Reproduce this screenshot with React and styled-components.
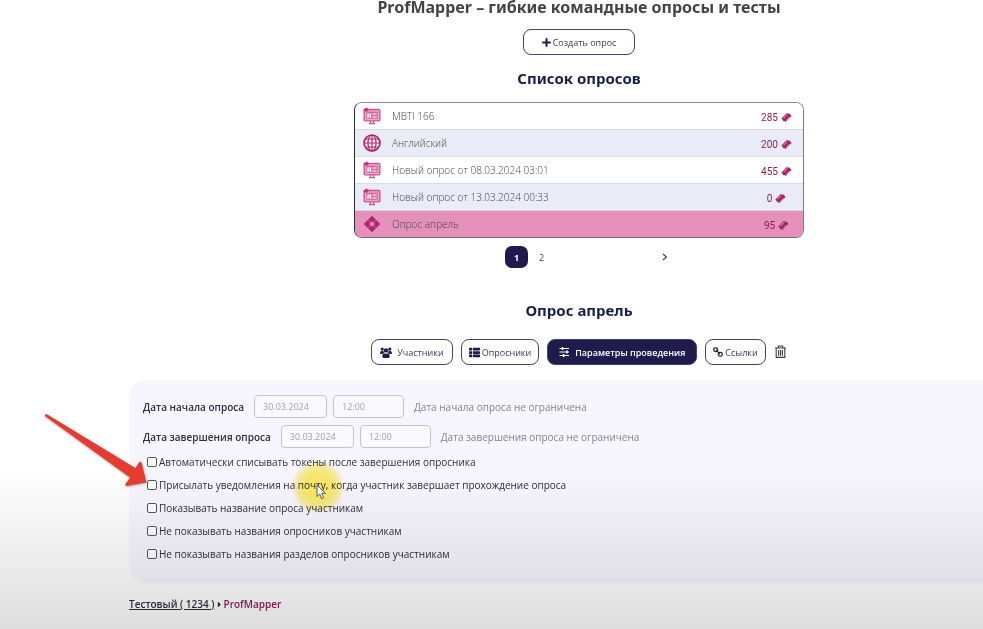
import React, { useState } from 'react';
import styled, { createGlobalStyle } from 'styled-components';
import { FaThList, FaCaretRight } from 'react-icons/fa';

const surveys = [
  { id: 1, name: 'MBTI 166', tokens: 285, icon: 'monitor' },
  { id: 2, name: 'Английский', tokens: 200, icon: 'globe' },
  { id: 3, name: 'Новый опрос от 08.03.2024 03:01', tokens: 455, icon: 'monitor' },
  { id: 4, name: 'Новый опрос от 13.03.2024 00:33', tokens: 0, icon: 'monitor' },
  { id: 5, name: 'Опрос апрель', tokens: 95, icon: 'diamond' },
];

const dates = [
  { id: 'start', label: 'Дата начала опроса', note: 'Дата начала опроса не ограничена' },
  { id: 'end', label: 'Дата завершения опроса', note: 'Дата завершения опроса не ограничена' },
];

const options = [
  'Автоматически списывать токены после завершения опросника',
  'Присылать уведомления на почту, когда участник завершает прохождение опроса',
  'Показывать название опроса участникам',
  'Не показывать названия опросников участникам',
  'Не показывать названия разделов опросников участникам',
];

const PlusIcon = () => (
  <svg width="9" height="9" viewBox="0 0 9 9">
    <path d="M4.5 1 V8 M1 4.5 H8" stroke="#1f1b4d" strokeWidth="2" strokeLinecap="round" />
  </svg>
);

const UsersIcon = () => (
  <svg width="12" height="11" viewBox="0 0 12 11" fill="#1f1b4d">
    <circle cx="2.2" cy="2.1" r="1.6" />
    <circle cx="9.8" cy="2.1" r="1.6" />
    <circle cx="6" cy="3.4" r="2.2" />
    <path d="M0 6.2 Q0 4 1.8 4 H3.4 Q3.8 5.4 4.4 5.8 Q3 6 2.4 7 H0.6 Q0 7 0 6.2 Z" />
    <path d="M12 6.2 Q12 4 10.2 4 H8.6 Q8.2 5.4 7.6 5.8 Q9 6 9.6 7 H11.4 Q12 7 12 6.2 Z" />
    <path d="M2.3 9.6 Q2.3 6.2 4.4 6.2 Q6 7.2 7.6 6.2 Q9.7 6.2 9.7 9.6 Q9.7 11 8.4 11 H3.6 Q2.3 11 2.3 9.6 Z" />
  </svg>
);

const MonitorIcon = () => (
  <svg width="18" height="18" viewBox="0 0 18 18" fill="none" stroke="#cc5593">
    <rect x="1.2" y="2.5" width="15.6" height="11.4" rx="1" fill="#f0a9cb" strokeWidth="1.4" />
    <path d="M0.4 2.6 L3.6 0.6 L6 2.2 L4.6 4.6 L1.2 4.6 Z" fill="#c2377f" stroke="none" />
    <rect x="3.4" y="4.6" width="11.4" height="7.2" fill="#d968a1" stroke="none" />
    <path d="M5 11 V7 H7.6 V11 M5 9 H7.6 M9.6 7 H13.6 M9.6 10 H13.6" stroke="#fff" strokeWidth="1.2" />
    <path d="M7.4 14 V16 M10.6 14 V16 M6 16.6 H12" strokeWidth="1.2" />
  </svg>
);

const GlobeIcon = () => (
  <svg width="18" height="18" viewBox="0 0 18 18" fill="none" stroke="#b0246a" strokeWidth="1.1">
    <circle cx="9" cy="9" r="8" fill="#fbeaf3" strokeWidth="1.6" />
    <ellipse cx="9" cy="9" rx="4" ry="8" />
    <path d="M9 1 V17 M1 9 H17 M2.2 5 H15.8 M2.2 13 H15.8" />
  </svg>
);

const DiamondIcon = () => (
  <svg width="18" height="18" viewBox="0 0 18 18">
    <path d="M9 0.8 L17.2 9 L9 17.2 L0.8 9 Z" fill="#b0246a" />
    <path d="M9 6.2 L11.8 9 L9 11.8 L6.2 9 Z" fill="#e590ba" />
    <path
      d="M4.9 4.9 L7.4 7.4 M13.1 4.9 L10.6 7.4 M4.9 13.1 L7.4 10.6 M13.1 13.1 L10.6 10.6"
      stroke="#e590ba"
      strokeWidth="0.6"
    />
  </svg>
);

const TokenIcon = () => (
  <svg width="11" height="11" viewBox="0 0 11 11">
    <path d="M0.4 6.6 L6.2 0.8 L7.3 2 L8.2 1.2 L10.6 4 L9.6 5 L4.6 10 L3.6 9 L2.8 9.6 Z" fill="#a3225f" />
    <path d="M2.4 6.4 L6.2 2.6 M5.1 8.6 L8.9 4.8" stroke="#f3d3e2" strokeWidth="0.8" />
  </svg>
);

const SlidersIcon = () => (
  <svg width="11" height="10" viewBox="0 0 11 10" fill="none" stroke="#fff" strokeWidth="1">
    <path d="M0.5 1.5 H10 M0.5 5 H10 M0.5 8.5 H10" />
    <path d="M3.5 0 V3 M8 3.5 V6.5 M4.5 7 V10" strokeWidth="1.6" />
  </svg>
);

const ChainIcon = () => (
  <svg width="10" height="10" viewBox="0 0 10 10" fill="none" stroke="#2a2840" strokeWidth="1.3">
    <rect x="0.8" y="0.8" width="3.8" height="3.8" rx="1.5" />
    <rect x="5.4" y="5.4" width="3.8" height="3.8" rx="1.5" />
    <path d="M3 3 L7 7" />
  </svg>
);

const TrashIcon = () => (
  <svg width="13" height="14" viewBox="0 0 13 14" fill="none" stroke="#3d3b4d" strokeWidth="1.1">
    <path d="M1 3 H12 M4.3 3 V1 H8.7 V3 M2.2 3 V12.4 H10.8 V3 M4.6 5 V10.8 M6.5 5 V10.8 M8.4 5 V10.8" />
  </svg>
);

const icons = { monitor: MonitorIcon, globe: GlobeIcon, diamond: DiamondIcon };

const App = () => {
  const [selected, setSelected] = useState(5);
  const [checked, setChecked] = useState([]);

  const toggle = (index) =>
    setChecked((prev) => (prev.includes(index) ? prev.filter((i) => i !== index) : [...prev, index]));

  return (
    <StPage>
      <GlobalStyle />
      <StMain>
        <StTitle>ProfMapper – гибкие командные опросы и тесты</StTitle>
        <StButton $wide>
          <PlusIcon />
          Создать опрос
        </StButton>
        <StHeading>Список опросов</StHeading>

        <StList>
          {surveys.map(({ id, name, tokens, icon }) => {
            const Icon = icons[icon];
            return (
              <StItem key={id}>
                <StRow $active={id === selected} onClick={() => setSelected(id)}>
                  <Icon />
                  <StName>{name}</StName>
                  <StTokens>
                    {tokens}
                    <TokenIcon />
                  </StTokens>
                </StRow>
              </StItem>
            );
          })}
        </StList>

        <StPagination>
          <StPageButton $current>1</StPageButton>
          <StPageButton>2</StPageButton>
          <StNext aria-label="Следующая страница">
            <svg width="6" height="8" viewBox="0 0 6 8" fill="none" stroke="#444" strokeWidth="1.2">
              <path d="M1 1 L4.4 4 L1 7" />
            </svg>
          </StNext>
        </StPagination>

        <StSurveyHeading>Опрос апрель</StSurveyHeading>
        <StTabs>
          <StButton>
            <UsersIcon />
            Участники
          </StButton>
          <StButton $tight>
            <FaThList size={11} color="#1f1b4d" />
            Опросники
          </StButton>
          <StButton $primary>
            <SlidersIcon />
            Параметры проведения
          </StButton>
          <StButton $tight>
            <ChainIcon />
            Ссылки
          </StButton>
          <StIconButton aria-label="Удалить опрос">
            <TrashIcon />
          </StIconButton>
        </StTabs>

        <StPanel>
          {dates.map(({ id, label, note }) => (
            <StDateRow key={id}>
              <StDateLabel htmlFor={`${id}-date`}>{label}</StDateLabel>
              <StInputs>
                <StInput id={`${id}-date`} defaultValue="30.03.2024" />
                <StInput $short aria-label={`${label}, время`} defaultValue="12:00" />
              </StInputs>
              <StNote>{note}</StNote>
            </StDateRow>
          ))}
          <StOptions>
            {options.map((text, index) => (
              <StOption key={text}>
                <StCheckbox type="checkbox" checked={checked.includes(index)} onChange={() => toggle(index)} />
                {text}
              </StOption>
            ))}
          </StOptions>
        </StPanel>

        <StBreadcrumbs>
          <a href="#test">Тестовый ( 1234 )</a>
          <FaCaretRight size={9} />
          <span>ProfMapper</span>
        </StBreadcrumbs>
      </StMain>

      {/* затемнение внизу и указатели поверх страницы */}
      <StShade />
      <StSpot />
      <StCursor width="11" height="16" viewBox="0 0 11 16">
        <path d="M1 1 V12.5 L3.7 10 L5.6 14.6 L7.6 13.8 L5.7 9.3 H9.4 Z" fill="#fff" stroke="#444" strokeWidth="0.9" />
      </StCursor>
      <StArrow width="106" height="76" viewBox="0 0 106 76">
        <path
          d="M1.2 3.2 Q0 0.5 3.4 1.4 L91.5 55 L95.3 49 Q97 48 97.8 50 L102.5 69.5 L82.5 73 Q80.5 72.5 81.8 70.5 L86 64.5 Z"
          fill="#e63c30"
        />
      </StArrow>
    </StPage>
  );
};

const GlobalStyle = createGlobalStyle`
  * {
    box-sizing: border-box;
  }
  body {
    margin: 0;
    background: #fff;
    color: #2f2d3f;
    font-family: 'Open Sans', 'Noto Sans', sans-serif;
    font-size: 10px;
  }
  button, input {
    font-family: inherit;
  }
`;

const StPage = styled.div`
  position: relative;
  min-height: 100vh;
  overflow: hidden;
`;

const StMain = styled.main`
  display: flex;
  flex-direction: column;
  align-items: center;
  margin-left: 129px;
  margin-right: -46px;
`;

const StTitle = styled.h1`
  margin: 0 0 15px;
  font-family: 'Noto Sans', sans-serif;
  font-size: 16px;
  font-weight: 700;
  line-height: 14px;
  color: #444;
`;

const StHeading = styled.h2`
  margin: 11px 0 12px;
  font-family: 'Noto Sans', sans-serif;
  font-size: 15px;
  font-weight: 700;
  line-height: 24px;
  color: #16204a;
`;

const StSurveyHeading = styled(StHeading)`
  margin: 30px 0 17px;
`;

const StButton = styled.button`
  display: flex;
  align-items: center;
  justify-content: center;
  gap: ${({ $tight, $wide }) => ($tight || $wide ? '2px' : '5px')};
  height: 26px;
  padding: 0 ${({ $wide, $primary, $tight }) => ($wide ? '18px' : $primary ? '11px' : $tight ? '7px' : '8px')};
  border: 1px solid #45436a;
  border-radius: 8px;
  background: ${({ $primary }) => ($primary ? '#1f1b4d' : '#fff')};
  color: ${({ $primary }) => ($primary ? '#fff' : '#3d3b4d')};
  font-size: 9px;
  font-weight: ${({ $primary }) => ($primary ? 600 : 400)};
  white-space: nowrap;
  cursor: pointer;
`;

const StIconButton = styled.button`
  display: flex;
  padding: 0;
  border: 0;
  background: none;
  cursor: pointer;
`;

const StList = styled.ul`
  width: 450px;
  margin: 0;
  padding: 0;
  list-style: none;
  border: 1px solid;
  border-color: #8d8c96 #7b7986 #6d6b7c #2a2840;
  border-radius: 8px;
  overflow: hidden;
`;

const StItem = styled.li`
  background: #fff;
  border-bottom: 1px solid #d9d9de;
  &:nth-child(even) {
    background: #e9ecf6;
  }
  &:last-child {
    border-bottom: 0;
  }
`;

const StRow = styled.button`
  display: flex;
  align-items: center;
  width: 100%;
  height: 26px;
  padding: 0 0 0 8px;
  border: 0;
  background: ${({ $active }) => ($active ? '#e590ba' : 'transparent')};
  text-align: left;
  cursor: pointer;
`;

const StName = styled.span`
  flex: 1;
  padding-left: 11px;
  font-size: 10px;
  font-weight: 300;
  color: #444;
`;

const StTokens = styled.span`
  display: flex;
  align-items: center;
  justify-content: center;
  gap: 3px;
  width: 53px;
  padding-top: 2px;
  font-family: Roboto, sans-serif;
  font-size: 10px;
  color: #8c1d55;
`;

const StPagination = styled.nav`
  display: flex;
  align-items: center;
  gap: 2px;
  width: 148px;
  margin-top: 8px;
`;

const StPageButton = styled.button`
  width: 23px;
  height: 22px;
  padding: 0;
  border: 0;
  border-radius: 7px;
  background: ${({ $current }) => ($current ? '#1f1b4d' : 'transparent')};
  color: ${({ $current }) => ($current ? '#fff' : '#444')};
  font-size: 9px;
  font-weight: ${({ $current }) => ($current ? 700 : 400)};
`;

const StNext = styled.button`
  display: flex;
  margin-left: auto;
  margin-right: -15px;
  padding: 0;
  border: 0;
  background: none;
`;

const StTabs = styled.div`
  display: flex;
  align-items: center;
  gap: 8px;
`;

const StPanel = styled.section`
  display: flex;
  flex-direction: column;
  gap: 7px;
  align-self: stretch;
  margin-top: 15px;
  padding: 15px 14px 18px;
  border-radius: 18px;
  background: #f7f5fe;
`;

const StDateRow = styled.div`
  display: flex;
  align-items: center;
  gap: 10px;
`;

const StDateLabel = styled.label`
  font-weight: 600;
`;

const StInputs = styled.div`
  display: flex;
  gap: 6px;
`;

const StInput = styled.input`
  width: ${({ $short }) => ($short ? '71px' : '73px')};
  height: 23px;
  padding: 0 8px;
  border: 1px solid #c4c3cd;
  border-radius: 4px;
  background: #faf9fe;
  color: #a0a0a8;
  font-size: 9px;
`;

const StNote = styled.span`
  color: #85848e;
`;

const StOptions = styled.div`
  display: flex;
  flex-direction: column;
  align-items: flex-start;
  padding-left: 4px;
  margin-top: -5px;
`;

const StOption = styled.label`
  display: flex;
  align-items: center;
  gap: 2px;
  height: 23px;
`;

const StCheckbox = styled.input`
  appearance: none;
  width: 10px;
  height: 10px;
  margin: 0;
  border: 1px solid #555;
  border-radius: 2px;
  background: #fff;
  &:checked {
    background: #1f1b4d;
  }
`;

const StBreadcrumbs = styled.nav`
  display: flex;
  align-items: center;
  align-self: flex-start;
  margin-top: 13px;
  line-height: 16px;
  font-weight: 600;
  a {
    color: inherit;
  }
  span {
    color: #8c1d55;
  }
`;

const StShade = styled.div`
  position: absolute;
  inset: auto 0 0;
  height: 160px;
  background: linear-gradient(rgba(0, 0, 0, 0), rgba(0, 0, 0, 0.13));
  pointer-events: none;
`;

const StSpot = styled.div`
  position: absolute;
  left: 291px;
  top: 460px;
  width: 54px;
  height: 54px;
  border-radius: 50%;
  background: radial-gradient(circle closest-side, #fff26c 50%, #fcf5a6 80%, #fff 100%);
  mix-blend-mode: multiply;
  pointer-events: none;
`;

const StCursor = styled.svg`
  position: absolute;
  left: 316px;
  top: 484px;
  pointer-events: none;
`;

const StArrow = styled.svg`
  position: absolute;
  left: 44px;
  top: 413px;
  filter: drop-shadow(0 1px 1px rgba(0, 0, 0, 0.3));
  pointer-events: none;
`;

export default App;
